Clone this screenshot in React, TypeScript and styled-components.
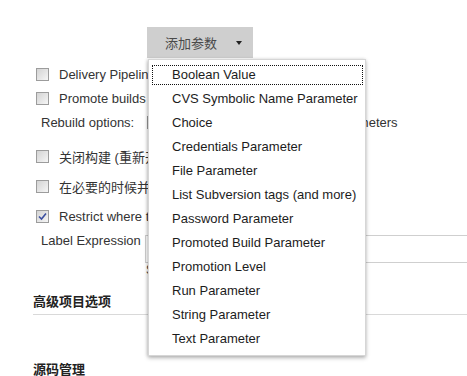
import styled, { createGlobalStyle } from 'styled-components'

const GlobalStyle = createGlobalStyle`
  html, body {
    margin: 0;
    padding: 0;
    background: #fff;
  }
  body {
    font-family: 'Liberation Sans', Arial, 'Noto Sans CJK SC', sans-serif;
    font-size: 13px;
    color: #333;
    overflow: hidden;
  }
`

const Page = styled.div`
  position: relative;
  width: 467px;
  height: 376px;
  overflow: hidden;
`

const Toolbar = styled.div`
  padding: 27px 0 0 147px;
`

const AddButton = styled.button`
  display: flex;
  align-items: center;
  box-sizing: border-box;
  width: 106px;
  height: 31px;
  padding: 0 0 0 18px;
  border: none;
  background: #cfcfcf;
  color: #4a4a4a;
  font-family: 'Liberation Sans', 'Noto Sans CJK SC', sans-serif;
  font-size: 13px;
  gap: 19px;
`

const Caret = styled.span`
  width: 0;
  height: 0;
  border-left: 3.5px solid transparent;
  border-right: 3.5px solid transparent;
  border-top: 4px solid #222;
  margin-top: 1px;
`

const Menu = styled.ul`
  position: absolute;
  left: 148px;
  top: 59px;
  box-sizing: border-box;
  width: 218px;
  margin: 0;
  padding: 3px 0 4px;
  list-style: none;
  background: #fff;
  border: 1px solid #d6d6d6;
  box-shadow: 0 2px 4px rgba(0, 0, 0, 0.28), -1px 0 3px rgba(0, 0, 0, 0.12);
  z-index: 10;
`

const MenuItem = styled.li`
  padding: 3px 3px 3px 4px;
`

const MenuLink = styled.span<{ $focused?: boolean }>`
  display: block;
  height: 18px;
  line-height: 18px;
  padding-left: 19px;
  color: #1c1c1c;
  font-size: 13px;
  outline: ${(p) => (p.$focused ? '1px dotted #111' : 'none')};
`

const Form = styled.div`
  padding-left: 33px;
`

const Row = styled.div<{ $top: number; $indent: number }>`
  display: flex;
  align-items: center;
  height: 24px;
  margin-top: ${(p) => p.$top}px;
  padding-left: ${(p) => p.$indent}px;
  white-space: nowrap;
`

const Box = styled.span<{ $checked?: boolean }>`
  position: relative;
  display: inline-block;
  box-sizing: border-box;
  width: 13px;
  height: 13px;
  margin-right: 10px;
  border: 1px solid #9c9c9c;
  background: linear-gradient(135deg, #d4d4d4 0%, #e6e6e6 55%, #f6f6f6 100%);
  flex: none;

  svg {
    position: absolute;
    left: 1px;
    top: 1px;
  }
`

const FieldLabel = styled.span<{ $width: number }>`
  display: inline-block;
  width: ${(p) => p.$width}px;
  flex: none;
`

const LabelRow = styled.div`
  display: flex;
  align-items: flex-start;
  margin-top: 5px;
  padding-left: 8px;
  white-space: nowrap;
`

const LabelText = styled.span`
  width: 104px;
  line-height: 16px;
  flex: none;
`

const InputBox = styled.div`
  width: 400px;
  height: 28px;
  margin-top: 2px;
  box-sizing: border-box;
  border: 1px solid #cfcfcf;
  flex: none;
`

const Hint = styled.div`
  padding-left: 113px;
  line-height: 14px;
  margin-top: 0;
  font-size: 12px;
  color: #444;
`

const SectionHeading = styled.div<{ $top: number; $line?: boolean }>`
  margin-top: ${(p) => p.$top}px;
  padding-bottom: ${(p) => (p.$line ? 4 : 0)}px;
  border-bottom: ${(p) => (p.$line ? '1px solid #d9d9d9' : 'none')};
  font-family: 'Liberation Sans', 'Noto Sans CJK SC', sans-serif;
  font-size: 13px;
  font-weight: bold;
  color: #222;
  line-height: 17px;
`

const parameterTypes = [
  'Boolean Value',
  'CVS Symbolic Name Parameter',
  'Choice',
  'Credentials Parameter',
  'File Parameter',
  'List Subversion tags (and more)',
  'Password Parameter',
  'Promoted Build Parameter',
  'Promotion Level',
  'Run Parameter',
  'String Parameter',
  'Text Parameter',
]

function Checkbox({ checked }: { checked?: boolean }) {
  return (
    <Box $checked={checked}>
      {checked && (
        <svg width="9" height="9" viewBox="0 0 9 9">
          <path d="M1 4.5 L3.5 7 L8 1.5" fill="none" stroke="#3b4fa0" strokeWidth="1.6" />
        </svg>
      )}
    </Box>
  )
}

export default function App() {
  return (
    <Page>
      <GlobalStyle />
      <Toolbar>
        <AddButton>
          添加参数
          <Caret />
        </AddButton>
      </Toolbar>

      <Menu>
        {parameterTypes.map((name, i) => (
          <MenuItem key={name}>
            <MenuLink $focused={i === 0}>{name}</MenuLink>
          </MenuItem>
        ))}
      </Menu>

      <Form>
        <Row $top={4} $indent={3}>
          <Checkbox />
          Delivery Pipeline configuration
        </Row>
        <Row $top={0} $indent={3}>
          <Checkbox />
          Promote builds when...
        </Row>
        <Row $top={0} $indent={8}>
          <FieldLabel $width={106}>Rebuild options:</FieldLabel>
          <Checkbox />
          Rebuild Without Asking For Parameters
        </Row>
        <Row $top={10} $indent={3}>
          <Checkbox />
          关闭构建 (重新开启前无法构建)
        </Row>
        <Row $top={6} $indent={3}>
          <Checkbox />
          在必要的时候并发构建
        </Row>
        <Row $top={6} $indent={3}>
          <Checkbox checked />
          Restrict where this project can be run
        </Row>
        <LabelRow>
          <LabelText>Label Expression</LabelText>
          <InputBox />
        </LabelRow>
        <Hint>Slaves in label: 1</Hint>
        <SectionHeading $top={16} $line>
          高级项目选项
        </SectionHeading>
        <SectionHeading $top={46}>源码管理</SectionHeading>
      </Form>
    </Page>
  )
}
